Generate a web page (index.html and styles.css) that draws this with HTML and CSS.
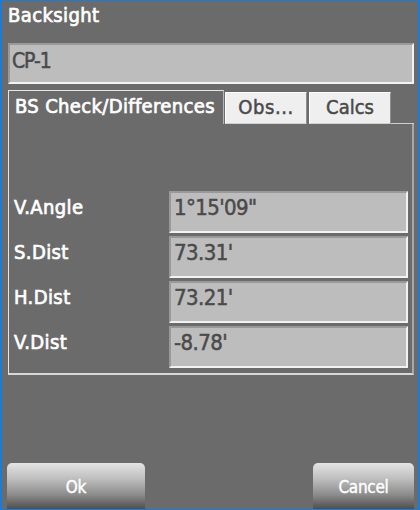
FILE: index.html
```html
<!DOCTYPE html>
<html>
<head>
<meta charset="utf-8">
<link rel="stylesheet" href="styles.css">
</head>
<body>
<div class="frame">
  <div class="title">Backsight</div>
  <div class="field point">CP-1</div>
  <div class="tabs">
    <div class="tab active">BS Check/Differences</div>
    <div class="tab obs">Obs...</div>
    <div class="tab calcs">Calcs</div>
    <div class="tab-rest"></div>
  </div>
  <div class="panel">
    <div class="row"><span class="label">V.Angle</span><span class="field value">1°15'09"</span></div>
    <div class="row"><span class="label">S.Dist</span><span class="field value">73.31'</span></div>
    <div class="row"><span class="label">H.Dist</span><span class="field value">73.21'</span></div>
    <div class="row"><span class="label">V.Dist</span><span class="field value">-8.78'</span></div>
  </div>
  <div class="spacer"></div>
  <div class="buttons">
    <div class="btn ok">Ok</div>
    <div class="btn cancel">Cancel</div>
  </div>
</div>
</body>
</html>
```

FILE: styles.css
```css
html, body {
  margin: 0;
  padding: 0;
}
body {
  font-family: "DejaVu Sans Condensed", "DejaVu Sans", sans-serif;
  font-stretch: condensed;
}
.frame {
  width: 420px;
  height: 510px;
  box-sizing: border-box;
  background: #6b6b6b;
  border-style: solid;
  border-color: #1b7bd6;
  border-width: 1px 2px 1px 2px;
  padding: 0 4px 0 6px;
  display: flex;
  flex-direction: column;
}
.title {
  height: 42px;
  box-sizing: border-box;
  padding-top: 1px;
  font-size: 20px;
  line-height: 26px;
  color: #ffffff;
  letter-spacing: 0.4px;
  -webkit-text-stroke: 0.7px #ffffff;
}
.field {
  box-sizing: border-box;
  background: #bdbdbd;
  border-style: solid;
  border-width: 2px;
  border-color: #999999 #f2f2f2 #f2f2f2 #999999;
  color: #4a4a4a;
  -webkit-text-stroke: 0.5px #4a4a4a;
}
.point {
  height: 41px;
  padding: 2px 0 0 2px;
  font-size: 21px;
  line-height: 28px;
  letter-spacing: -1.1px;
}
.tabs {
  margin-top: 6px;
  display: flex;
  align-items: flex-end;
  height: 34px;
}
.tab {
  box-sizing: border-box;
  font-size: 20px;
  text-align: center;
}
.tab.active {
  width: 216px;
  height: 34px;
  color: #ffffff;
  -webkit-text-stroke: 0.7px #ffffff;
  letter-spacing: 0.35px;
  border-style: solid;
  border-width: 1px 1px 0 1px;
  border-color: #e6e6e6 #b5b5b5 transparent #e6e6e6;
  line-height: 30px;
  text-align: left;
  padding-left: 6px;
  white-space: nowrap;
}
.tab.obs, .tab.calcs {
  height: 32px;
  background: #efefef;
  color: #4a4a4a;
  -webkit-text-stroke: 0.5px #4a4a4a;
  border-style: solid;
  border-width: 1px;
  border-color: #ffffff #8e8e8e #cfcfcf #ffffff;
  line-height: 28px;
}
.tab.obs {
  width: 82px;
  margin-left: 1px;
  letter-spacing: 0.6px;
}
.tab.calcs {
  width: 82px;
  margin-left: 2px;
}
.tab-rest {
  flex: 1;
  height: 1px;
  border-top: 1px solid #cfcfcf;
  box-sizing: border-box;
}
.panel {
  height: 251px;
  box-sizing: border-box;
  border-style: solid;
  border-width: 0 2px 2px 1px;
  border-color: transparent #a8a8a8 #d8d8d8 #e6e6e6;
  padding: 67px 4px 0 5px;
  display: flex;
  flex-direction: column;
  gap: 3px;
}
.row {
  display: flex;
  align-items: flex-start;
  height: 42px;
}
.label {
  width: 155px;
  padding-top: 2px;
  line-height: 28px;
  color: #ffffff;
  font-size: 20px;
  letter-spacing: 0.4px;
  -webkit-text-stroke: 0.7px #ffffff;
}
.value {
  flex: 1;
  height: 42px;
  padding: 1px 0 0 3px;
  font-size: 22px;
  line-height: 28px;
  letter-spacing: -0.6px;
}
.spacer {
  flex: 1;
}
.buttons {
  display: flex;
  justify-content: space-between;
  height: 46px;
  margin-left: -1px;
}
.btn {
  box-sizing: border-box;
  height: 46px;
  border-radius: 5px 5px 0 0;
  background: linear-gradient(to bottom, #e4e4e4 0%, #bdbdbd 35%, #8a8a8a 70%, #4e4e4e 100%);
  color: #ffffff;
  font-size: 17px;
  -webkit-text-stroke: 0.4px #ffffff;
  text-align: center;
  line-height: 48px;
  letter-spacing: -0.3px;
}
.btn.ok {
  width: 138px;
}
.btn.cancel {
  width: 101px;
}
```
